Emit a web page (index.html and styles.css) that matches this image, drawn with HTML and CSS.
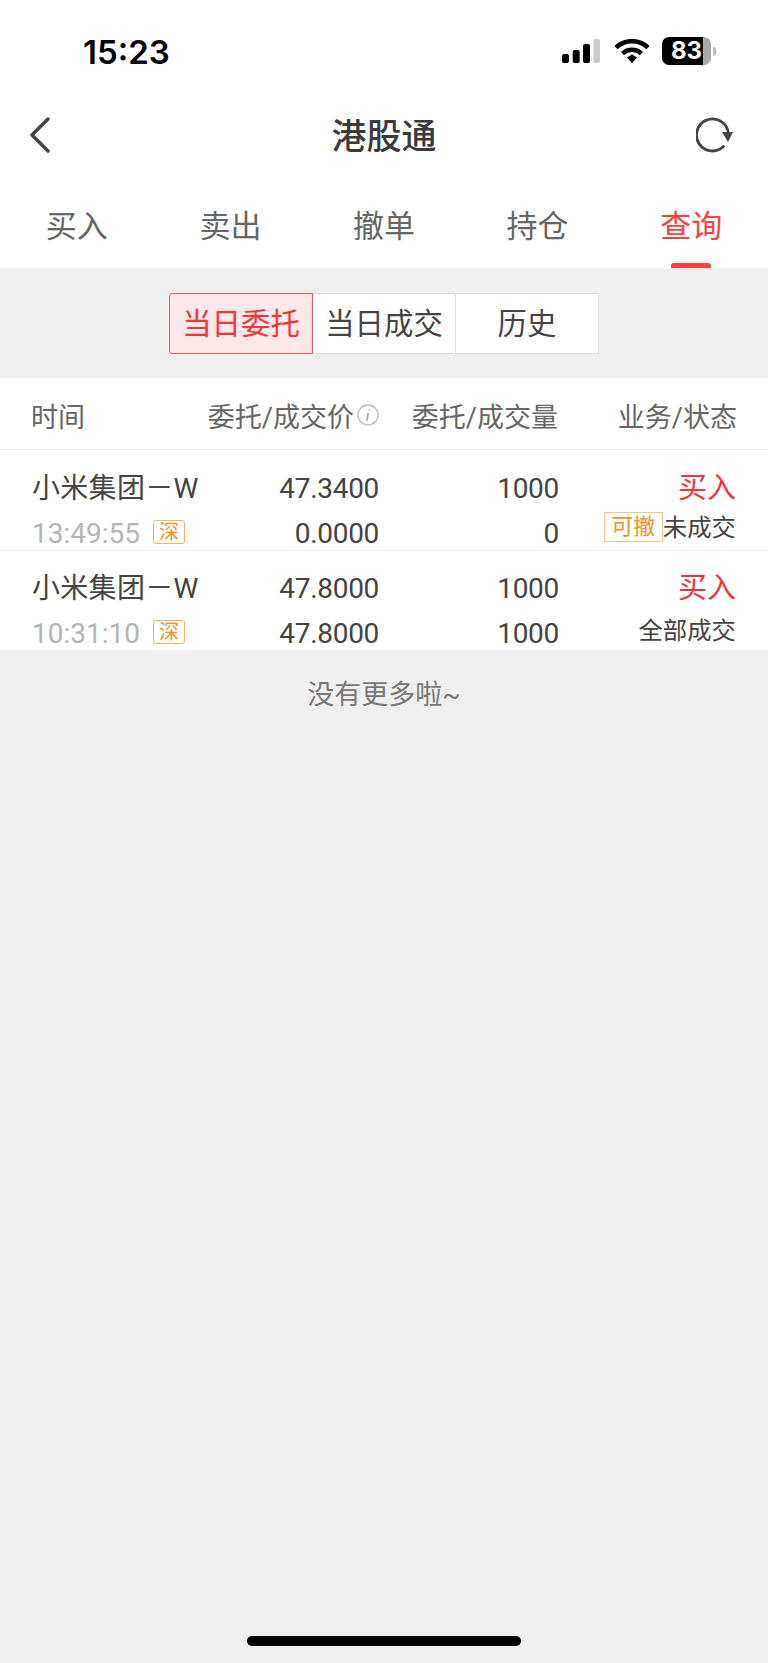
FILE: index.html
```html
<!doctype html>
<html>
<head>
<meta charset="utf-8">
<title>港股通</title>
<link rel="stylesheet" href="styles.css">
</head>

<body>
<div class="status">
	<span class="clock">15:23</span>
	<div class="status-icons">
		<svg class="signal" width="38" height="24" viewBox="0 0 38 24">
			<rect x="0" y="15" width="7" height="9" rx="2" fill="#000"/>
			<rect x="10.700" y="11" width="7" height="13" rx="2" fill="#000"/>
			<rect x="21" y="5" width="7" height="19" rx="2" fill="#000"/>
			<rect x="31.500" y="0" width="6.500" height="24" rx="2" fill="#ccc"/>
		</svg>
		<svg class="wifi" width="34" height="24" viewBox="0 0 34 24">
			<path d="M1 8.500C10 0 24 0 33 8.500" fill="none" stroke="#000" stroke-width="4.500"/>
			<path d="M7.500 14.500C13 9.500 21 9.500 26.500 14.500" fill="none" stroke="#000" stroke-width="4.500"/>
			<path d="M12 18.500L17 15.500L22 18.500L17 24Z" fill="#000"/>
		</svg>
		<div class="battery"><span class="battery-num">83</span></div>
		<i class="battery-nub"></i>
	</div>
</div>

<div class="nav">
	<svg width="22" height="36" viewBox="0 0 22 36">
		<path d="M19 2L3 18L19 34" fill="none" stroke="#444" stroke-width="3.400" stroke-linecap="round" stroke-linejoin="round"/>
	</svg>
	<h1 class="nav-title">港股通</h1>
	<svg class="refresh" width="38" height="38" viewBox="0 0 38 38">
		<path d="M32 15A16 16 0 1 0 27.500 30.600" fill="none" stroke="#444" stroke-width="2.800" stroke-linecap="round"/>
		<path d="M26 16H37L32 26Z" fill="#444"/>
	</svg>
</div>

<ul class="tabs">
	<li>买入</li>
	<li>卖出</li>
	<li>撤单</li>
	<li>持仓</li>
	<li class="active">查询</li>
</ul>

<div class="seg-wrap">
	<div class="seg">
		<span class="seg-item on">当日委托</span>
		<span class="seg-item">当日成交</span>
		<span class="seg-item">历史</span>
	</div>
</div>

<div class="row head">
	<span class="time-head">时间</span>
	<span class="price-head">委托/成交价<svg width="22" height="22" viewBox="0 0 22 22"><circle cx="11" cy="11" r="10" fill="none" stroke="#bbb" stroke-width="1.300"/><path d="M12.400 5.200v1.400M11.200 9l-1.400 8" fill="none" stroke="#aaa" stroke-width="1.800"/></svg></span>
	<span class="num">委托/成交量</span>
	<span class="num state-head">业务/状态</span>
</div>

<div class="row order first">
	<div class="cell">
		<div class="name">小米集团－W</div>
		<div class="time">13:49:55<em class="market">深</em></div>
	</div>
	<div class="cell num val">
		<div>47.3400</div>
		<div>0.0000</div>
	</div>
	<div class="cell num val">
		<div>1000</div>
		<div>0</div>
	</div>
	<div class="cell num val-state">
		<div class="buy">买入</div>
		<div class="state pending"><em class="cancel">可撤</em>未成交</div>
	</div>
</div>

<div class="row order">
	<div class="cell">
		<div class="name">小米集团－W</div>
		<div class="time">10:31:10<em class="market">深</em></div>
	</div>
	<div class="cell num val">
		<div>47.8000</div>
		<div>47.8000</div>
	</div>
	<div class="cell num val">
		<div>1000</div>
		<div>1000</div>
	</div>
	<div class="cell num val-state">
		<div class="buy">买入</div>
		<div class="state">全部成交</div>
	</div>
</div>

<div class="more">没有更多啦~</div>

<div class="home-bar"></div>
</body>
</html>
```

FILE: styles.css
```css
* {margin:0; padding:0; list-style:none; box-sizing:border-box;}

html, body {height:100%;}
body {width:768px; height:1663px; background:#efefef; color:#444; overflow:hidden; display:flex; flex-direction:column; font-family:"Roboto","Noto Sans CJK SC",sans-serif;}

.status {height:96px; background:#fff; display:flex; justify-content:space-between; align-items:flex-start; padding:37px 52px 0 83px;}
.clock {font:600 33px/30px "Inter",sans-serif; color:#000;}
.status-icons {display:flex; align-items:center; height:28px;}
.wifi {margin-left:15px;}
.battery {width:49px; height:28px; margin-left:13px; border-radius:7px; background:linear-gradient(to right,#000 41px,#aaa 41px); text-align:center;}
.battery-num {font:700 24px/28px "Inter",sans-serif; color:#fff;}
.battery-nub {width:3px; height:9px; margin-left:2px; background:#bbb; border-radius:0 3px 3px 0;}

.nav {height:78px; background:#fff; display:grid; grid-template-columns:1fr auto 1fr; align-items:center; padding:0 29px;}
.nav-title {font-size:35px; font-weight:500; color:#3a3a3a; margin-top:-4px;}
.refresh {justify-self:end; margin-right:5px;}

.tabs {height:94px; background:#fff; display:flex;}
.tabs li {flex:1; text-align:center; font-size:31px; line-height:78px; padding-top:14px; color:#666; position:relative;}
.tabs li.active {color:#ff4040;}
.tabs li.active:after {content:""; position:absolute; left:50%; bottom:0; width:40px; height:5px; margin-left:-20px; background:#ff4040; border-radius:3px 3px 0 0;}

.seg-wrap {height:110px; display:flex; justify-content:center; padding-top:25px;}
.seg {display:flex; width:430px; height:61px;}
.seg-item {background:#fff; border:1px solid #dcdcdc; border-left:0; font-size:29.400px; line-height:55px; padding-top:3px; text-align:center; color:#444; flex:none; width:143px;}
.seg-item.on {width:144px; background:#fce8e8; border:1px solid #ee5a5f; border-radius:3px 0 0 3px; color:#f0343a; padding-top:3px;}

.row {display:grid; grid-template-columns:190px 156px 180px 177px; padding:0 32px; background:#fff;}
.num {text-align:right;}
.val {margin-right:-1px; letter-spacing:-0.300px;}
.val-state {margin-right:-1px;}

.head {height:72px; padding-top:3px; align-items:center; font-size:27px; color:#666; border-bottom:1px solid #eaeaea;}
.time-head {margin-left:-1px;}
.price-head {display:flex; justify-content:flex-end; align-items:center; white-space:nowrap; margin-right:-1px;}
.price-head svg {margin-left:3px; flex:none;}
.state-head {margin-right:-2px;}

.order {height:99px; font-size:28px; line-height:45px; padding-top:15px;}
.order.first {height:101px; padding-top:16px; border-bottom:1px solid #f2f2f2;}
.cell {white-space:nowrap;}
.name {letter-spacing:0.300px;}
.time {color:#b5b5b5; display:flex; align-items:center;}
.market {width:32px; height:24px; margin:-3px 0 0 13px; border:1.500px solid #fbb067; border-radius:3px; color:#f98e1f; font:normal 20px/20px "Noto Sans CJK SC",sans-serif; text-align:center;}
.buy {color:#f0343a; font-size:29px;}
.state {display:flex; justify-content:flex-end; align-items:center; height:39px; font-size:24.400px;}
.state.pending {margin-top:-3px;}
.cancel {width:59px; height:30px; margin-top:-1px; border:1px solid #fcc584; color:#f98e1f; font-style:normal; font-size:22px; line-height:28px; text-align:center;}

.more {height:90px; text-align:center; font-size:27px; line-height:90px; color:#777;}

.home-bar {width:274px; height:10px; margin:auto auto 17px; background:#000; border-radius:5px;}
```
